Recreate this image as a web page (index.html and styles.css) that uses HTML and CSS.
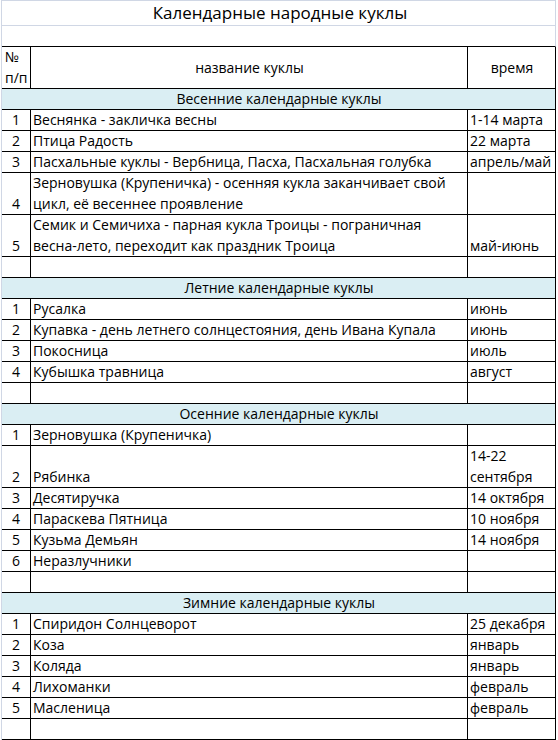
FILE: index.html
```html
<!DOCTYPE html>
<html lang="ru">
<head>
<meta charset="utf-8">
<title>Календарные народные куклы</title>
<link rel="stylesheet" href="styles.css">
</head>
<body>
<div class="sheet">
  <div class="title">Календарные народные куклы</div>
  <div class="blank"></div>

  <div class="row head">
    <div class="cell hnum">№<br>п/п</div>
    <div class="cell hcen">название куклы</div>
    <div class="cell hcen">время</div>
  </div>

  <div class="row"><div class="cell section">Весенние календарные куклы</div></div>
  <div class="row"><div class="cell num">1</div><div class="cell">Веснянка - закличка весны</div><div class="cell time">1-14 марта</div></div>
  <div class="row"><div class="cell num">2</div><div class="cell">Птица Радость</div><div class="cell time">22 марта</div></div>
  <div class="row"><div class="cell num">3</div><div class="cell">Пасхальные куклы - Вербница, Пасха, Пасхальная голубка</div><div class="cell time">апрель/май</div></div>
  <div class="row tall"><div class="cell num">4</div><div class="cell">Зерновушка (Крупеничка) - осенняя кукла заканчивает свой<br>цикл, её весеннее проявление</div><div class="cell time"></div></div>
  <div class="row tall"><div class="cell num">5</div><div class="cell">Семик и Семичиха - парная кукла Троицы - пограничная<br>весна-лето, переходит как праздник Троица</div><div class="cell time">май-июнь</div></div>
  <div class="row"><div class="cell num"></div><div class="cell"></div><div class="cell time"></div></div>

  <div class="row"><div class="cell section">Летние календарные куклы</div></div>
  <div class="row"><div class="cell num">1</div><div class="cell">Русалка</div><div class="cell time">июнь</div></div>
  <div class="row"><div class="cell num">2</div><div class="cell">Купавка - день летнего солнцестояния, день Ивана Купала</div><div class="cell time">июнь</div></div>
  <div class="row"><div class="cell num">3</div><div class="cell">Покосница</div><div class="cell time">июль</div></div>
  <div class="row"><div class="cell num">4</div><div class="cell">Кубышка травница</div><div class="cell time">август</div></div>
  <div class="row"><div class="cell num"></div><div class="cell"></div><div class="cell time"></div></div>

  <div class="row"><div class="cell section">Осенние календарные куклы</div></div>
  <div class="row"><div class="cell num">1</div><div class="cell">Зерновушка (Крупеничка)</div><div class="cell time"></div></div>
  <div class="row tall"><div class="cell num">2</div><div class="cell">Рябинка</div><div class="cell time">14-22<br>сентября</div></div>
  <div class="row"><div class="cell num">3</div><div class="cell">Десятиручка</div><div class="cell time">14 октября</div></div>
  <div class="row"><div class="cell num">4</div><div class="cell">Параскева Пятница</div><div class="cell time">10 ноября</div></div>
  <div class="row"><div class="cell num">5</div><div class="cell">Кузьма Демьян</div><div class="cell time">14 ноября</div></div>
  <div class="row"><div class="cell num">6</div><div class="cell">Неразлучники</div><div class="cell time"></div></div>
  <div class="row"><div class="cell num"></div><div class="cell"></div><div class="cell time"></div></div>

  <div class="row"><div class="cell section">Зимние календарные куклы</div></div>
  <div class="row"><div class="cell num">1</div><div class="cell">Спиридон Солнцеворот</div><div class="cell time">25 декабря</div></div>
  <div class="row"><div class="cell num">2</div><div class="cell">Коза</div><div class="cell time">январь</div></div>
  <div class="row"><div class="cell num">3</div><div class="cell">Коляда</div><div class="cell time">январь</div></div>
  <div class="row"><div class="cell num">4</div><div class="cell">Лихоманки</div><div class="cell time">февраль</div></div>
  <div class="row"><div class="cell num">5</div><div class="cell">Масленица</div><div class="cell time">февраль</div></div>
  <div class="row"><div class="cell num"></div><div class="cell"></div><div class="cell time"></div></div>
</div>
</body>
</html>
```

FILE: styles.css
```css
html, body {
  margin: 0;
  padding: 0;
  background: #ffffff;
}

body {
  font-family: "Open Sans", "Liberation Sans", sans-serif;
  font-size: 14px;
  color: #000000;
}

.sheet {
  width: 554px;
  margin-left: 1px;
  border-left: 1px solid #d0d7e5;
  min-height: 740px;
}

.title {
  height: 24px;
  border-top: 1px solid #d0d7e5;
  border-bottom: 1px solid #d0d7e5;
  border-right: 1px solid #d0d7e5;
  display: flex;
  align-items: center;
  justify-content: center;
  font-size: 17px;
  line-height: 24px;
  padding-left: 3px;
}

.blank {
  height: 20px;
  border-right: 1px solid #d0d7e5;
  border-bottom: 1px solid #000000;
}

.row {
  display: grid;
  grid-template-columns: 29px 437px 88px;
  height: 21px;
  box-sizing: border-box;
  border-bottom: 1px solid #000000;
}

.row.tall {
  height: 42px;
}

.row.head {
  height: 42px;
}

.cell {
  box-sizing: border-box;
  border-right: 1px solid #000000;
  display: flex;
  flex-direction: column;
  justify-content: flex-end;
  padding: 0 1px 0 2px;
  line-height: 20px;
  white-space: nowrap;
  overflow: hidden;
}

.row.tall .cell {
  line-height: 20.5px;
}

.num {
  align-items: center;
  padding: 0;
}

.time {
  padding-left: 2px;
}

.section {
  grid-column: 1 / -1;
  background: #daeef3;
  align-items: center;
}

.hnum {
  padding-left: 3px;
  line-height: 20.5px;
}

.hcen {
  justify-content: center;
  align-items: center;
}
```
